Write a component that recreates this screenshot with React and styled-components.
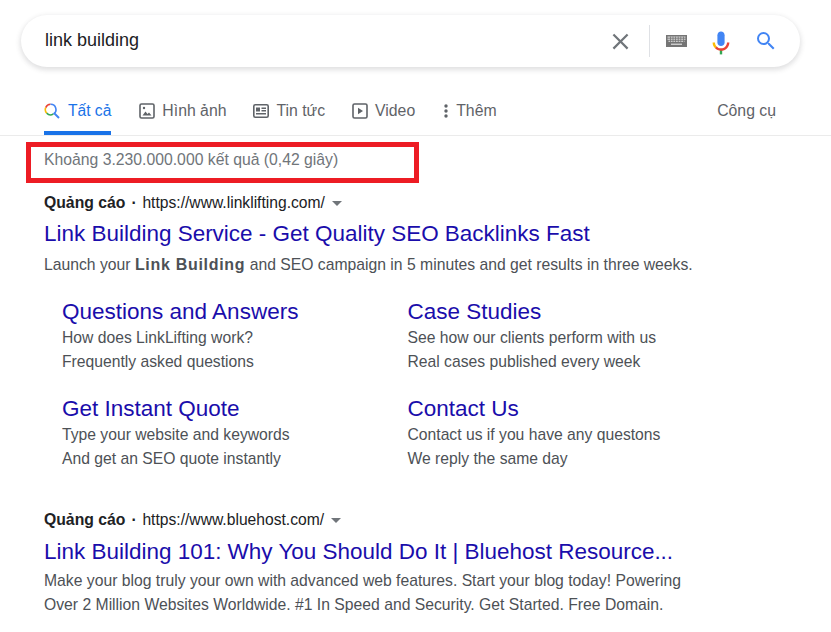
import React from "react";
import styled, { createGlobalStyle } from "styled-components";

const Global = createGlobalStyle`
  html, body { margin: 0; padding: 0; background: #fff; }
  body { font-family: "Liberation Sans", Arial, sans-serif; color: #4d5156; overflow: hidden; }
`;
const Page = styled.div`
  position: relative;
  width: 831px;
  height: 632px;
  overflow: hidden;
  background: #fff;
`;
const SearchBar = styled.div`
  margin: 15px 0 0 21px;
  width: 779px;
  height: 52px;
  box-sizing: border-box;
  border-radius: 26px;
  background: #fff;
  box-shadow: 0 2px 5px 1px rgba(64, 60, 67, 0.16);
  display: flex;
  align-items: center;
  padding: 0 22px 0 24px;
`;
const Query = styled.div`
  flex: 1;
  font-size: 18px;
  color: #202124;
  margin-top: -2px;
`;
const IconRow = styled.div`
  display: flex;
  align-items: center;
`;
const Divider = styled.span`
  width: 1px;
  height: 32px;
  background: #dfe1e5;
  margin: 0 16px 0 15px;
`;
const IconGap = styled.span`
  width: ${(p) => p.$w}px;
`;
const Tabs = styled.div`
  display: flex;
  align-items: flex-start;
  height: 67px;
  margin-top: 1px;
  padding: 0 55px 0 44px;
  border-bottom: 1px solid #ebebeb;
`;
const Tab = styled.div`
  display: flex;
  align-items: center;
  gap: ${(p) => p.$gap ?? 7}px;
  height: 67px;
  padding-top: 22px;
  padding-bottom: ${(p) => (p.$active ? 0 : 4)}px;
  box-sizing: border-box;
  font-size: ${(p) => (p.$active ? 15.6 : 15.8)}px;
  color: ${(p) => (p.$active ? "#1a73e8" : "#5f6368")};
  margin-right: ${(p) => p.$mr ?? 28}px;
  border-bottom: ${(p) => (p.$active ? "4px solid #1a73e8" : "none")};
`;
const Spacer = styled.div`
  flex: 1;
`;
const Results = styled.div`
  padding: 0 0 0 44px;
`;
const Stats = styled.div`
  font-size: 15.75px;
  line-height: 20px;
  color: #70757a;
  padding-top: 14px;
  white-space: nowrap;
`;
const Highlight = styled.div`
  position: absolute;
  left: 26px;
  top: 142px;
  width: 393px;
  height: 41px;
  box-sizing: border-box;
  border: 5px solid #ed1c24;
`;
const AdLine = styled.div`
  display: flex;
  align-items: center;
  font-size: 15.65px;
  line-height: 20px;
  color: #202124;
  margin-top: ${(p) => p.$mt}px;
`;
const AdLabel = styled.b`
  font-size: 15.75px;
  color: #202124;
`;
const Dot = styled.span`
  margin: 0 6px;
  width: 5px;
  font-weight: 700;
`;
const Caret = styled.span`
  width: 0;
  height: 0;
  margin-left: 7px;
  margin-top: 1px;
  border-left: 5px solid transparent;
  border-right: 5px solid transparent;
  border-top: 5px solid #70757a;
`;
const Title = styled.div`
  font-size: 22.47px;
  line-height: 30px;
  color: #1a0dab;
  margin-top: ${(p) => p.$mt ?? 6}px;
  white-space: nowrap;
`;
const Snippet = styled.div`
  font-size: 15.72px;
  line-height: 24px;
  color: #4d5156;
  white-space: nowrap;
  margin-top: ${(p) => p.$mt ?? 0}px;
  b { color: #4d5156; font-weight: 700; font-size: 16px; letter-spacing: 0.7px; }
`;
const Sitelinks = styled.div`
  display: grid;
  grid-template-columns: 345.5px 1fr;
  row-gap: 20px;
  padding-left: 18px;
  margin-top: 20px;
`;
const Sitelink = styled.div``;
const SitelinkTitle = styled.div`
  font-size: 22.5px;
  line-height: 29px;
  color: #1a0dab;
`;
const SitelinkText = styled.div`
  font-size: 15.7px;
  line-height: 24px;
  color: #4d5156;
  white-space: nowrap;
`;
const MicSvg = styled.svg`
  margin-top: 3px;
`;

const ClearIcon = () => (
  <svg width="27" height="27" viewBox="0 0 24 24" fill="#70757a">
    <path d="M19 6.41 17.59 5 12 10.59 6.41 5 5 6.41 10.59 12 5 17.59 6.41 19 12 13.41 17.59 19 19 17.59 13.41 12z" />
  </svg>
);
const KeyboardIcon = () => (
  <svg width="21" height="12" viewBox="0 0 21 12">
    <rect width="21" height="12" fill="#757575" />
    <g fill="#d8d8d8">
      <rect x="1.5" y="1.5" width="18" height="1.2" />
      <rect x="1.5" y="3.6" width="18" height="1.2" />
      <rect x="2.5" y="5.7" width="16" height="1.2" />
      <rect x="5" y="8.6" width="11" height="1.3" />
    </g>
    <g fill="#757575">
      <rect x="4" y="1.5" width="0.8" height="6" />
      <rect x="6.6" y="1.5" width="0.8" height="6" />
      <rect x="9.2" y="1.5" width="0.8" height="6" />
      <rect x="11.8" y="1.5" width="0.8" height="6" />
      <rect x="14.4" y="1.5" width="0.8" height="6" />
      <rect x="17" y="1.5" width="0.8" height="6" />
    </g>
  </svg>
);
const MicIcon = () => (
  <MicSvg width="24" height="24" viewBox="2 2.5 20 20">
    <path fill="#4285f4" d="M12 15c1.66 0 3-1.31 3-2.97V5.97C15 4.31 13.66 3 12 3S9 4.31 9 5.97v6.06C9 13.69 10.34 15 12 15z" />
    <path fill="#34a853" d="M11 18.08h2V22h-2z" />
    <path fill="#fbbc05" d="M7.05 16.87c-1.27-1.33-2.05-2.83-2.05-4.87h2c0 1.45.56 2.42 1.47 3.38v.32l-1.15 1.18z" />
    <path fill="#ea4335" d="M12 16.93c-1.5.01-2.7-.52-3.53-1.55l-1.42 1.49C8.2 18.04 9.9 19 12 19c3.87 0 6.9-3.03 7-7h-2c-.1 2.84-2.2 4.93-5 4.93z" />
  </MicSvg>
);
const SearchIcon = () => (
  <svg width="24" height="24" viewBox="0 0 24 24" fill="#4285f4">
    <path d="M15.5 14h-.79l-.28-.27A6.471 6.471 0 0 0 16 9.5 6.5 6.5 0 1 0 9.5 16c1.61 0 3.09-.59 4.23-1.57l.27.28v.79l5 4.99L20.49 19l-4.99-5zm-6 0C7.01 14 5 11.99 5 9.5S7.01 5 9.5 5 14 7.01 14 9.5 11.99 14 9.5 14z" />
  </svg>
);
const ColorSearchIcon = () => (
  <svg width="16" height="16" viewBox="0 0 16 16" fill="none" strokeWidth="1.6">
    <path d="M6.5 1.3A5.2 5.2 0 0 0 1.7 4.6" stroke="#ea4335" />
    <path d="M1.7 4.6a5.2 5.2 0 0 0 1 5.5" stroke="#fbbc05" />
    <path d="M2.7 10.1a5.2 5.2 0 0 0 6.7.8" stroke="#34a853" />
    <path d="M6.5 1.3a5.2 5.2 0 0 1 3 9.6" stroke="#4285f4" />
    <path d="M10 10l5 5" stroke="#4285f4" strokeWidth="2" />
  </svg>
);
const ImageIcon = () => (
  <svg width="16" height="16" viewBox="0 0 16 16">
    <rect x="1" y="1" width="14" height="14" rx="1.5" fill="none" stroke="#5f6368" strokeWidth="1.6" />
    <path d="M3.5 12.5 6.5 8.5l2 2.5 1.5-1.5 2.5 3z" fill="#5f6368" />
    <circle cx="5" cy="5" r="1.2" fill="#5f6368" />
  </svg>
);
const NewsIcon = () => (
  <svg width="16" height="14" viewBox="0 0 16 14">
    <rect x="0.8" y="0.8" width="14.4" height="12.4" rx="1.5" fill="none" stroke="#5f6368" strokeWidth="1.6" />
    <rect x="3" y="3.5" width="4" height="4" fill="#5f6368" />
    <path d="M8.5 3.5H13V5H8.5zM8.5 6H13v1.5H8.5zM3 9h10v1.5H3z" fill="#5f6368" />
  </svg>
);
const VideoIcon = () => (
  <svg width="16" height="16" viewBox="0 0 16 16">
    <rect x="1" y="1" width="14" height="14" rx="1.5" fill="none" stroke="#5f6368" strokeWidth="1.6" />
    <path d="M6 4.8v6.4L11 8z" fill="#5f6368" />
  </svg>
);
const MoreIcon = () => (
  <svg width="4" height="14" viewBox="0 0 4 14" fill="#5f6368">
    <circle cx="2" cy="2" r="1.7" />
    <circle cx="2" cy="7" r="1.7" />
    <circle cx="2" cy="12" r="1.7" />
  </svg>
);

const links = [
  ["Questions and Answers", "How does LinkLifting work?", "Frequently asked questions"],
  ["Case Studies", "See how our clients perform with us", "Real cases published every week"],
  ["Get Instant Quote", "Type your website and keywords", "And get an SEO quote instantly"],
  ["Contact Us", "Contact us if you have any questons", "We reply the same day"],
];

export default function App() {
  return (
    <Page>
      <Global />
      <SearchBar>
        <Query>link building</Query>
        <IconRow>
          <ClearIcon />
          <Divider />
          <KeyboardIcon />
          <IconGap $w={22} />
          <MicIcon />
          <IconGap $w={21} />
          <SearchIcon />
        </IconRow>
      </SearchBar>
      <Tabs>
        <Tab $active $gap={8}><ColorSearchIcon />Tất cả</Tab>
        <Tab $mr={27}><ImageIcon />Hình ảnh</Tab>
        <Tab $gap={7} $mr={27}><NewsIcon />Tin tức</Tab>
        <Tab $mr={29}><VideoIcon />Video</Tab>
        <Tab $gap={8} $mr={0}><MoreIcon />Thêm</Tab>
        <Spacer />
        <Tab $mr={0}>Công cụ</Tab>
      </Tabs>
      <Results>
        <Stats>Khoảng 3.230.000.000 kết quả (0,42 giây)</Stats>
        <AdLine $mt={23}>
          <AdLabel>Quảng cáo</AdLabel><Dot>·</Dot>https://www.linklifting.com/<Caret />
        </AdLine>
        <Title>Link Building Service - Get Quality SEO Backlinks Fast</Title>
        <Snippet $mt={4}>Launch your <b>Link Building</b> and SEO campaign in 5 minutes and get results in three weeks.</Snippet>
        <Sitelinks>
          {links.map(([t, a, b]) => (
            <Sitelink key={t}>
              <SitelinkTitle>{t}</SitelinkTitle>
              <SitelinkText>{a}</SitelinkText>
              <SitelinkText>{b}</SitelinkText>
            </Sitelink>
          ))}
        </Sitelinks>
        <AdLine $mt={39}>
          <AdLabel>Quảng cáo</AdLabel><Dot>·</Dot>https://www.bluehost.com/<Caret />
        </AdLine>
        <Title $mt={7}>Link Building 101: Why You Should Do It | Bluehost Resource...</Title>
        <Snippet $mt={2}>Make your blog truly your own with advanced web features. Start your blog today! Powering</Snippet>
        <Snippet>Over 2 Million Websites Worldwide. #1 In Speed and Security. Get Started. Free Domain.</Snippet>
      </Results>
      <Highlight />
    </Page>
  );
}
